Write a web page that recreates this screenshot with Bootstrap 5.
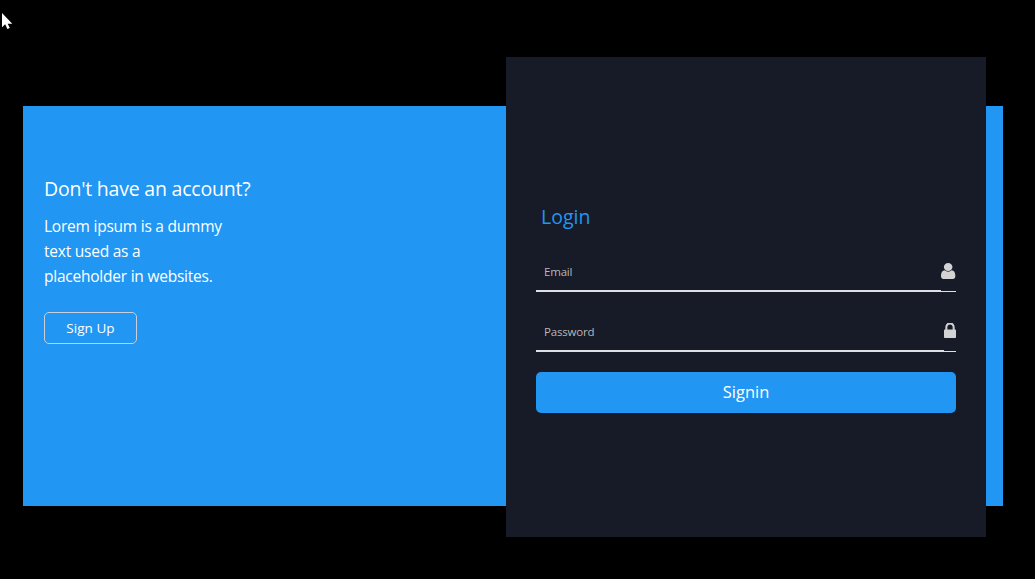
<!DOCTYPE html>
<html lang="en">
<head>
<meta charset="utf-8">
<meta name="viewport" content="width=device-width, initial-scale=1">
<title>Login</title>
<link href="https://cdn.jsdelivr.net/npm/bootstrap@5.3.0/dist/css/bootstrap.min.css" rel="stylesheet">
<style>
body{background:#000;font-family:"Open Sans","Noto Sans",sans-serif;height:579px;overflow:hidden}
.panel{width:980px;height:400px;margin:106px 0 0 23px;background:#2196f3;color:#fff}
.signup{width:483px;padding:68px 0 0 21px}
.signup h2{font-size:19.500px;line-height:30px;font-weight:400;margin:0;letter-spacing:-.21px}
.signup p{font-size:15.500px;line-height:25px;margin:10px 0 23px;letter-spacing:-.23px}
.btn-signup{width:93px;height:32px;border:1px solid #c8cfd8;border-radius:5px;color:#fff;font-size:13.500px;line-height:20px;padding:5px 0;letter-spacing:.05px}
.login{width:480px;height:480px;margin-top:-49px;background:#171a27;padding:145px 30px 0}
.login h1{font-size:19.500px;line-height:30px;font-weight:400;color:#2196f3;margin:0 0 25px 5px;letter-spacing:0}
.field{height:35px;border-bottom:1px solid #dfe0e6;margin-bottom:25px}
.field input{height:34px;border:0;border-bottom:1px solid #dfe0e6;border-radius:0;background:transparent!important;color:#ccc;font-size:11.500px;padding:0 8px 4px;letter-spacing:-.19px}
.field input::placeholder{color:#b8b8b8;opacity:1}
.field svg{flex:none;margin-top:6px;fill:#d3d3d3}
.btn-signin{height:41px;margin-top:-5px;border:0;border-radius:5px;background:#2196f3;color:#fff;font-size:16.500px;line-height:25px;padding:7px 0 9px;letter-spacing:0}
.pointer{left:1px;top:12px}
</style>
</head>
<body>
<svg class="pointer position-absolute" width="12" height="18" viewBox="0 0 12 18"><path d="M1 1v14.2l3.200-3 2.200 4.900 2.400-1-2.100-4.400h4.600z" fill="#fff"/></svg>
<main class="panel d-flex">
  <section class="signup">
    <h2>Don't have an account?</h2>
    <p>Lorem ipsum is a dummy<br>text used as a<br>placeholder in websites.</p>
    <button type="button" class="btn btn-signup d-block">Sign Up</button>
  </section>
  <form class="login">
    <h1>Login</h1>
    <div class="field d-flex">
      <input type="email" class="form-control shadow-none" placeholder="Email" aria-label="Email">
      <svg width="15" height="16" viewBox="256 128 1340 1536" preserveAspectRatio="none"><path d="M1536 1399q0 109-62.500 187t-150.500 78h-854q-88 0-150.500-78t-62.500-187q0-85 8.500-160.500t31.500-152 58.500-131 94-89 134.500-34.500q131 128 313 128t313-128q76 0 134.500 34.500t94 89 58.500 131 31.500 152 8.500 160.500zm-256-887q0 159-112.500 271.500t-271.500 112.500-271.500-112.500-112.500-271.500 112.500-271.500 271.500-112.500 271.500 112.500 112.500 271.500z"/></svg>
    </div>
    <div class="field d-flex">
      <input type="password" class="form-control shadow-none" placeholder="Password" aria-label="Password">
      <svg width="12" height="15" viewBox="320 192 1152 1344" preserveAspectRatio="none"><path d="M640 768h512v-192q0-106-75-181t-181-75-181 75-75 181v192zm832 96v576q0 40-28 68t-68 28h-960q-40 0-68-28t-28-68v-576q0-40 28-68t68-28h32v-192q0-184 132-316t316-132 316 132 132 316v192h32q40 0 68 28t28 68z"/></svg>
    </div>
    <button type="button" class="btn btn-signin w-100">Signin</button>
  </form>
</main>
<script src="https://cdn.jsdelivr.net/npm/bootstrap@5.3.0/dist/js/bootstrap.bundle.min.js"></script>
</body>
</html>
